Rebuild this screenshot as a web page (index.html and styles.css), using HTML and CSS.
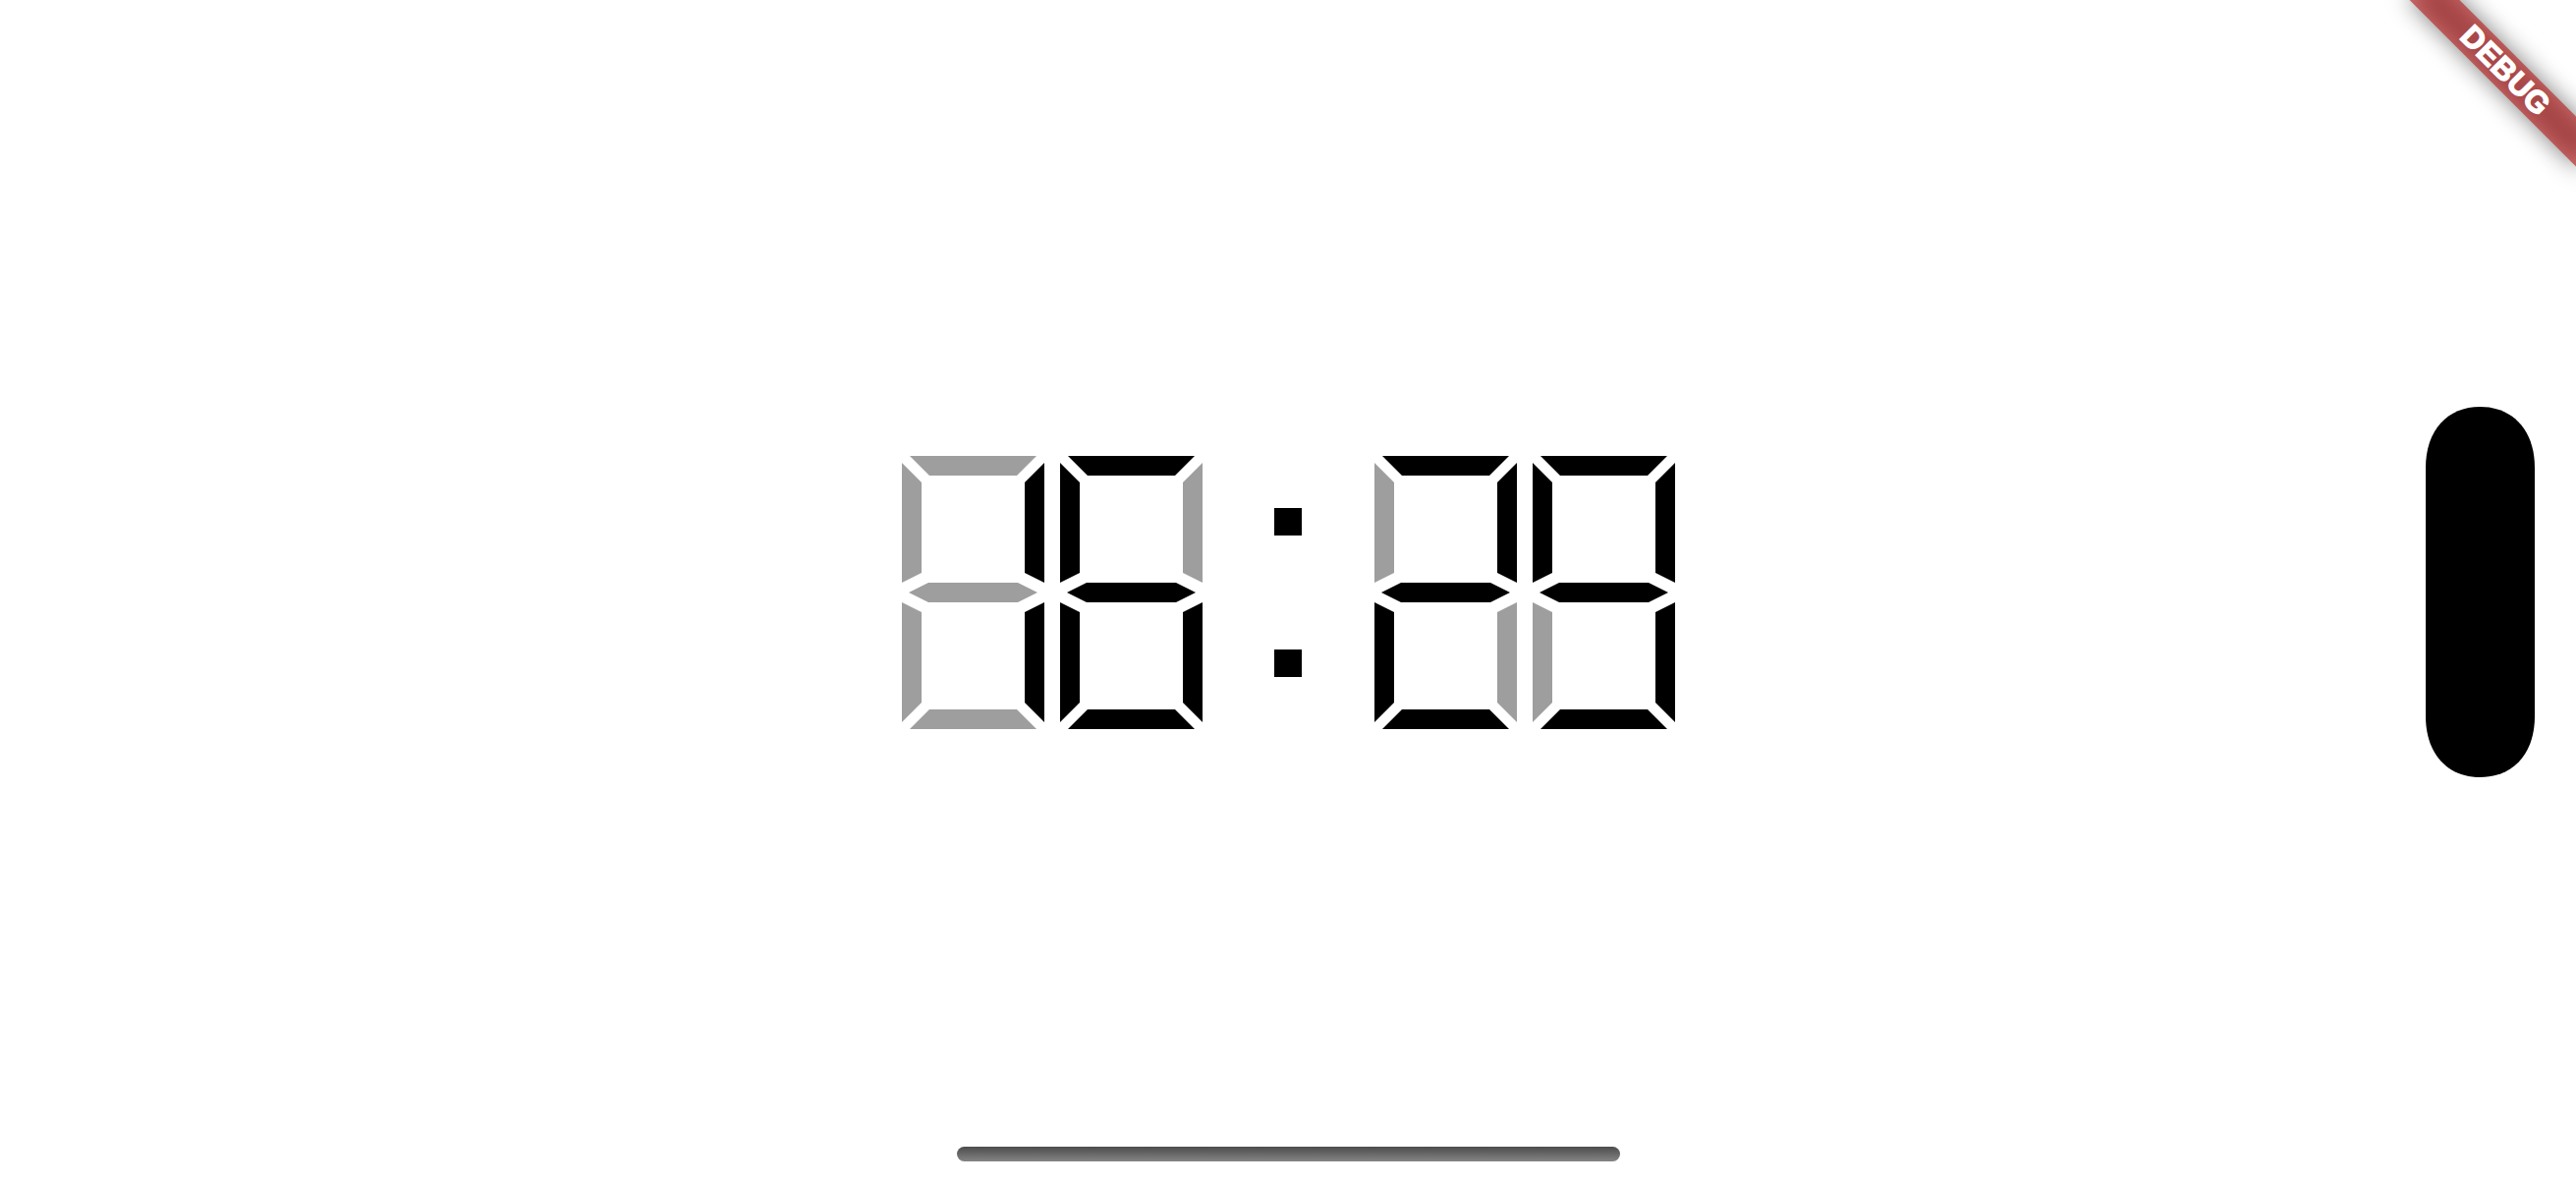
FILE: index.html
```html
<!DOCTYPE html>
<html lang="en">
<head>
<meta charset="utf-8">
<title>Clock</title>
<link rel="stylesheet" href="styles.css">
</head>
<body>
<main class="screen">
  <div class="clock">
    <svg class="digit" viewBox="0 0 145 278" width="145" height="278">
      <polygon class="seg off" points="8,0 137,0 117,20 28,20"/>
      <polygon class="seg on" points="145,7 125,27 125,119 145,129"/>
      <polygon class="seg on" points="145,149 125,159 125,251 145,271"/>
      <polygon class="seg off" points="28,258 117,258 137,278 8,278"/>
      <polygon class="seg off" points="0,149 20,159 20,251 0,271"/>
      <polygon class="seg off" points="0,7 20,27 20,119 0,129"/>
      <polygon class="seg off" points="7,139 27,129 118,129 138,139 118,149 27,149"/>
    </svg>
    <svg class="digit" viewBox="0 0 145 278" width="145" height="278">
      <polygon class="seg on" points="8,0 137,0 117,20 28,20"/>
      <polygon class="seg off" points="145,7 125,27 125,119 145,129"/>
      <polygon class="seg on" points="145,149 125,159 125,251 145,271"/>
      <polygon class="seg on" points="28,258 117,258 137,278 8,278"/>
      <polygon class="seg on" points="0,149 20,159 20,251 0,271"/>
      <polygon class="seg on" points="0,7 20,27 20,119 0,129"/>
      <polygon class="seg on" points="7,139 27,129 118,129 138,139 118,149 27,149"/>
    </svg>
    <div class="colon">
      <span class="dot"></span>
      <span class="dot"></span>
    </div>
    <svg class="digit" viewBox="0 0 145 278" width="145" height="278">
      <polygon class="seg on" points="8,0 137,0 117,20 28,20"/>
      <polygon class="seg on" points="145,7 125,27 125,119 145,129"/>
      <polygon class="seg off" points="145,149 125,159 125,251 145,271"/>
      <polygon class="seg on" points="28,258 117,258 137,278 8,278"/>
      <polygon class="seg on" points="0,149 20,159 20,251 0,271"/>
      <polygon class="seg off" points="0,7 20,27 20,119 0,129"/>
      <polygon class="seg on" points="7,139 27,129 118,129 138,139 118,149 27,149"/>
    </svg>
    <svg class="digit" viewBox="0 0 145 278" width="145" height="278">
      <polygon class="seg on" points="8,0 137,0 117,20 28,20"/>
      <polygon class="seg on" points="145,7 125,27 125,119 145,129"/>
      <polygon class="seg on" points="145,149 125,159 125,251 145,271"/>
      <polygon class="seg on" points="28,258 117,258 137,278 8,278"/>
      <polygon class="seg off" points="0,149 20,159 20,251 0,271"/>
      <polygon class="seg on" points="0,7 20,27 20,119 0,129"/>
      <polygon class="seg on" points="7,139 27,129 118,129 138,139 118,149 27,149"/>
    </svg>
  </div>

  <svg class="island" viewBox="0 0 111 377" width="111" height="377">
    <path d="M0,62 C0,24 22,0 55.5,0 C89,0 111,24 111,62 L111,315 C111,353 89,377 55.5,377 C22,377 0,353 0,315 Z"/>
  </svg>
  <div class="home-indicator"></div>

  <div class="banner-shadow"></div>
  <div class="banner"><span class="banner-text">DEBUG</span></div>
</main>
</body>
</html>
```
FILE: styles.css
```css
html, body {
  margin: 0;
  padding: 0;
  width: 2622px;
  height: 1206px;
  overflow: hidden;
  background: #ffffff;
}

.screen {
  position: relative;
  width: 2622px;
  height: 1206px;
  display: flex;
  align-items: center;
  justify-content: center;
  overflow: hidden;
  background: #ffffff;
}

.clock {
  display: flex;
  align-items: stretch;
  gap: 16px;
  height: 278px;
}

.digit {
  display: block;
  width: 145px;
  height: 278px;
}

.seg.on { fill: #000000; }
.seg.off { fill: #9e9e9e; }

.colon {
  width: 143px;
  height: 278px;
  box-sizing: border-box;
  padding: 53px 0;
  display: flex;
  flex-direction: column;
  justify-content: space-between;
  align-items: center;
}

.dot {
  display: block;
  width: 28px;
  height: 28px;
  background: #000000;
}

.island {
  position: absolute;
  left: 2469px;
  top: 414px;
  width: 111px;
  height: 377px;
  fill: #000000;
}

.home-indicator {
  position: absolute;
  left: 974px;
  top: 1167px;
  width: 675px;
  height: 15px;
  border-radius: 7.5px;
  background: linear-gradient(to bottom, #4c4c4c, #858585);
}

.banner-shadow,
.banner {
  position: absolute;
  left: 2430px;
  top: 54px;
  width: 240px;
  height: 36px;
  transform: rotate(45deg);
}

.banner-shadow {
  background: rgba(0, 0, 0, 0.5);
  filter: blur(12px);
}

.banner {
  background: rgba(183, 28, 28, 0.627);
  display: flex;
  align-items: center;
  justify-content: center;
}

.banner-text {
  font-family: "Liberation Sans", Arial, sans-serif;
  font-weight: 700;
  font-size: 31px;
  line-height: 36px;
  letter-spacing: 0.5px;
  color: #ffffff;
  -webkit-text-stroke: 1.4px #ffffff;
}
```
